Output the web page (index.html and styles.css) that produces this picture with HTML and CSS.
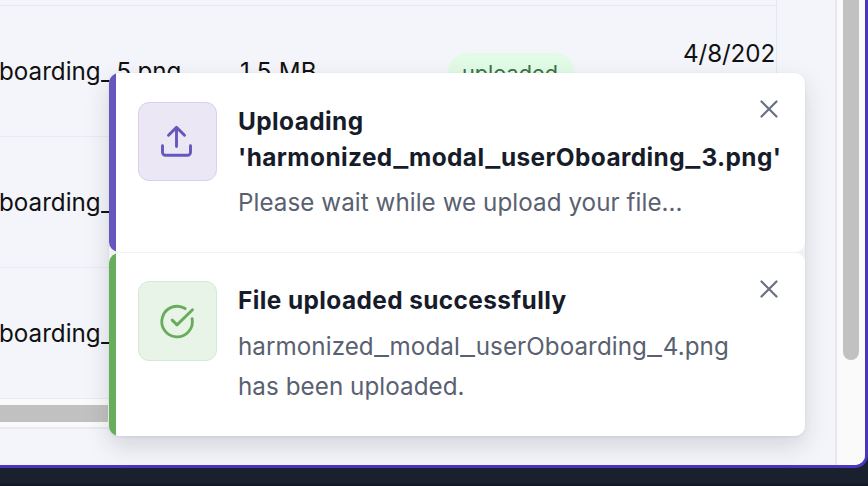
FILE: index.html
```html
<!DOCTYPE html>
<html lang="en">
<head>
<meta charset="utf-8">
<title>Files</title>
<link rel="stylesheet" href="styles.css">
</head>
<body>
<div class="window">
  <main class="content">
    <section class="panel">
      <div class="row row-edge"></div>
      <div class="row">
        <span class="name">boarding<span class="u">_</span>5.png</span>
        <span class="size">1.5 MB</span>
        <span class="status"><span class="pill">uploaded</span></span>
        <span class="date">4/8/202</span>
      </div>
      <div class="row"><span class="name">boarding<span class="u">_</span>4.png</span></div>
      <div class="row row-last"><span class="name">boarding<span class="u">_</span>3.png</span></div>
      <div class="hscroll"><div class="hthumb"></div></div>
    </section>
  </main>
  <div class="vscroll"><div class="vthumb"></div></div>
</div>
<div class="toasts">
  <article class="toast toast-progress">
    <div class="badge">
      <svg width="40" height="40" viewBox="0 0 40 40"><path d="M4.5 23.8v6.5a3 3 0 0 0 3 3h22a3 3 0 0 0 3-3v-6.5M10.5 13.2l8-7.8 8 7.8M18.5 5.8v18.7"/></svg>
    </div>
    <div class="text">
      <h2>Uploading<br>'harmonized<span class="u">_</span>modal<span class="u">_</span>userOboarding<span class="u">_</span>3.png'</h2>
      <p class="wait">Please wait while we upload your file...</p>
    </div>
    <svg class="close" width="18" height="18" viewBox="0 0 18 18"><path d="M1.5 1.5l15 15M16.5 1.5l-15 15"/></svg>
  </article>
  <article class="toast toast-success">
    <div class="badge">
      <svg width="40" height="40" viewBox="0 0 40 40"><path d="M27.2 7.6A15.3 15.3 0 1 0 34.1 17.6M34.5 8.8 19 23.9l-4.8-4.8"/></svg>
    </div>
    <div class="text">
      <h2>File uploaded successfully</h2>
      <p class="done">harmonized<span class="u">_</span>modal<span class="u">_</span>userOboarding<span class="u">_</span>4.png<br>has been uploaded.</p>
    </div>
    <svg class="close" width="18" height="18" viewBox="0 0 18 18"><path d="M1.5 1.5l15 15M16.5 1.5l-15 15"/></svg>
  </article>
</div>
</body>
</html>
```
FILE: styles.css
```css
* { box-sizing: border-box; }
body {
  margin: 0;
  height: 486px;
  overflow: hidden;
  position: relative;
  background: linear-gradient(#1a202e 0 483px, #111624 485px);
  font-family: Inter, "Liberation Sans", sans-serif;
  color: #111;
}
.window {
  display: flex;
  width: 868px;
  height: 468px;
  border: solid #4a35bd;
  border-width: 0 3px 3px 0;
  border-radius: 0 0 13px 0;
  background: #f4f5fa;
  overflow: hidden;
}
.content { flex: 1; }
.panel { width: 777px; border-right: 1px solid #e4e7f0; height: 429px; overflow: hidden; }
.row {
  display: grid;
  grid-template-columns: 240px 208px 235px 1fr;
  align-items: center;
  height: 131px;
  border-bottom: 1px solid #e8eaf1;
  font-size: 24.2px;
  white-space: nowrap;
}
.row-edge { height: 6px; }
.name { margin-left: -1px; }
.size { letter-spacing: .2px; }
.u {
  display: inline-block;
  transform: scaleX(1.36);
  margin: 0 2.4px;
}
.pill {
  display: inline-block;
  padding: 0 14px;
  width: 126px;
  height: 38px;
  margin-top: 2px;
  border-radius: 19px;
  background: #e1fbe7;
  color: #3b7144;
  font-size: 21.7px;
  line-height: 40px;
}
.date { padding-bottom: 35px; letter-spacing: -.1px; }
.hscroll { height: 30px; padding-top: 6px; background: #fafafa; border-bottom: 2px solid #e8eaee; }
.hthumb { width: 108px; height: 17px; background: #c1c1c1; }
.vscroll { width: 30px; padding-left: 6px; background: #fafafa; border-left: 2px solid #e7e8ec; }
.vthumb { width: 16px; height: 360px; border-radius: 0 0 8px 8px; background: #c1c1c1; }
.toasts {
  position: absolute;
  left: 109px;
  top: 73px;
  width: 696px;
  display: flex;
  flex-direction: column;
  gap: 1px;
  border-radius: 10px;
  background: #f2f2f5;
  box-shadow: 0 10px 24px rgba(30, 32, 50, .15), 0 1px 3px rgba(30, 32, 50, .08);
}
.toast {
  position: relative;
  display: flex;
  gap: 22px;
  height: 179px;
  padding: 29px 22px 29px 29px;
  border-radius: 10px;
}
.toast-progress { background: linear-gradient(90deg, #6557bd 7px, #fff 7px); }
.toast-success { height: 183px; padding-top: 28px; background: linear-gradient(90deg, #68ad5c 7px, #fff 7px); }
.badge {
  flex: none;
  display: grid;
  place-items: center;
  width: 79px;
  height: 80px;
  border: 1px solid;
  border-radius: 11px;
}
.badge svg { fill: none; stroke: currentColor; stroke-width: 2.9; stroke-linecap: round; stroke-linejoin: round; }
.toast-progress .badge { color: #6557bd; background: #ebe7f5; border-color: #d8d0ed; height: 79px; }
.toast-success .badge { color: #68ad5c; background: #e9f4e9; border-color: #d5ead4; }
.text { white-space: nowrap; padding-top: 1px; margin-left: -1px; }
h2 { margin: 0; font-size: 24.4px; line-height: 36px; font-weight: 700; letter-spacing: .41px; color: #171c2b; }
h2 .u { margin: 0 2.2px; transform: scaleX(1.3); }
p { margin: 8px 0 0; font-size: 24.2px; line-height: 40px; letter-spacing: .06px; color: #596170; }
.done { margin-top: 9px; }
.close { position: absolute; right: 27px; top: 27px; fill: none; stroke: #697080; stroke-width: 2.2; stroke-linecap: round; }
```
